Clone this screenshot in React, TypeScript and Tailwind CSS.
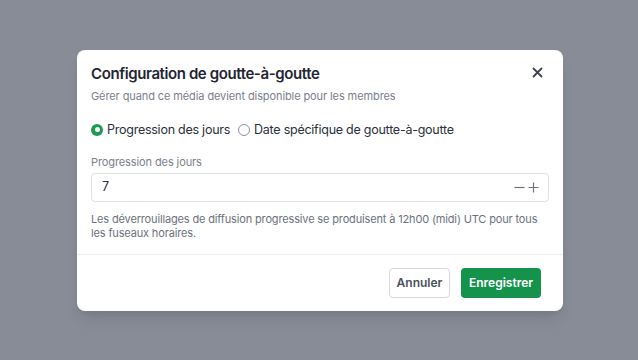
import React from "react";

export default function App() {
  return (
    <div className="w-[638px] h-[360px] bg-[#878c97] flex items-center justify-center" style={{ fontFamily: "Inter, 'Noto Sans', sans-serif" }}>
      <div className="w-[486px] h-[261px] ml-[2px] bg-white rounded-lg flex flex-col shadow-lg">
        <div className="px-[14px] pt-[15px] flex flex-col">
          <div className="flex items-start justify-between">
            <div className="flex flex-col">
              <div className="text-[15px] font-semibold text-[#1f2533] leading-[18px] tracking-[-0.4px]">Configuration de goutte-à-goutte</div>
              <div className="text-[11px] text-[#7a808c] leading-[14px] mt-[6px] tracking-[-0.1px]">Gérer quand ce média devient disponible pour les membres</div>
            </div>
            <button className="mr-[6px] mt-[2px] text-[#3a4150]">
              <svg width="11" height="11" viewBox="0 0 11 11"><path d="M1.5 1.5 L9.5 9.5 M9.5 1.5 L1.5 9.5" stroke="currentColor" strokeWidth="1.8" strokeLinecap="round" /></svg>
            </button>
          </div>
          <div className="flex items-center mt-[19px] text-[12.5px] text-[#2a303c] leading-[16px] tracking-[-0.25px]">
            <span className="w-[12px] h-[12px] rounded-full bg-[#1a9a53] flex items-center justify-center">
              <span className="w-[5px] h-[5px] rounded-full bg-white" />
            </span>
            <span className="ml-[4px]">Progression des jours</span>
            <span className="ml-[8px] w-[12px] h-[12px] rounded-full border border-[#8a909a] bg-white" />
            <span className="ml-[4px]">Date spécifique de goutte-à-goutte</span>
          </div>
          <div className="text-[11px] text-[#7a808c] leading-[14px] mt-[17px] tracking-[-0.1px]">Progression des jours</div>
          <div className="mt-[4px] h-[29px] border border-[#dde0e5] rounded-[4px] flex items-center justify-between pl-[10px] pr-[9px]">
            <span className="text-[12.5px] text-[#2a303c]">7</span>
            <div className="flex items-center gap-[3px] text-[#6b7280]">
              <svg width="11" height="11" viewBox="0 0 11 11"><path d="M0.5 5.5 H10.5" stroke="currentColor" strokeWidth="1.2" /></svg>
              <svg width="11" height="11" viewBox="0 0 11 11"><path d="M0.5 5.5 H10.5 M5.5 0.5 V10.5" stroke="currentColor" strokeWidth="1.2" /></svg>
            </div>
          </div>
          <div className="text-[11px] text-[#6b717d] leading-[14px] mt-[10px] tracking-[-0.15px]">
            Les déverrouillages de diffusion progressive se produisent à 12h00 (midi) UTC pour tous les fuseaux horaires.
          </div>
        </div>
        <div className="mt-[14px] border-t border-[#eceef1]" />
        <div className="flex-1 flex items-center justify-end gap-[11px] pr-[22px]">
          <button className="h-[30px] w-[61px] rounded-[4px] border border-[#d5d8de] text-[12px] font-semibold text-[#4a505c] bg-white">Annuler</button>
          <button className="h-[30px] w-[80px] rounded-[4px] bg-[#15924c] text-[12px] font-semibold text-white">Enregistrer</button>
        </div>
      </div>
    </div>
  );
}
